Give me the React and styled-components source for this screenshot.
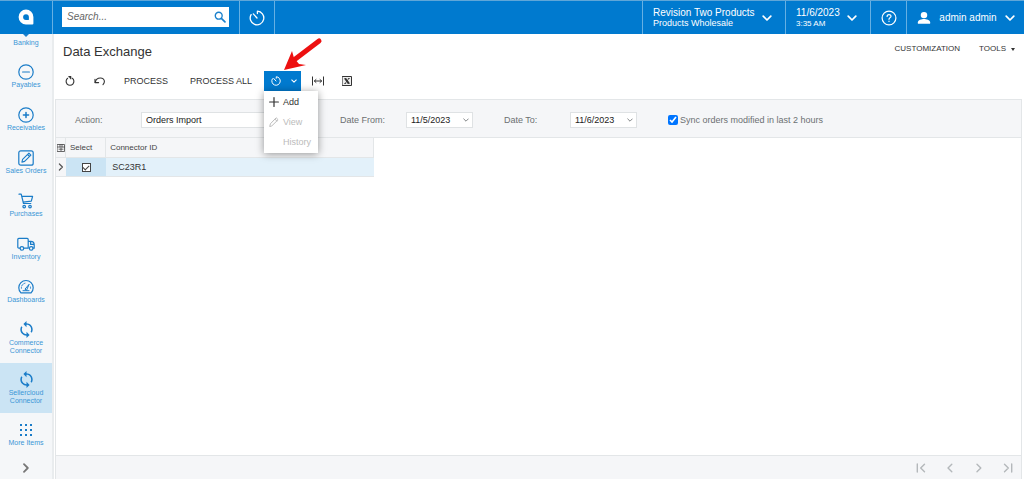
import React from 'react'
import styled, { createGlobalStyle } from 'styled-components'

const GlobalStyle = createGlobalStyle`
    *{
        box-sizing: border-box;
    }
    body{
        margin: 0;
        background-color: #fff;
        color: #333;
        font-family: "Liberation Sans", Arial, sans-serif;
        font-size: 9px;
        line-height: 12px;
    }
    button, input, select{
        font-family: inherit;
        font-size: inherit;
        line-height: inherit;
        color: inherit;
        margin: 0;
    }
    svg{
        display: block;
        flex: none;
    }
`

/* icons */

const Svg = ({ size = 16, width, height, box = '0 0 16 16', stroke = 1.2, children }) => (
    <svg
        width={width || size}
        height={height || size}
        viewBox={box}
        fill="none"
        stroke="currentColor"
        strokeWidth={stroke}
        strokeLinecap="round"
        strokeLinejoin="round"
        aria-hidden="true"
    >
        {children}
    </svg>
)

const LogoIcon = () => (
    <Svg size={16} stroke={0}>
        <path
            fill="currentColor"
            fillRule="evenodd"
            d="M8 .6a7.4 7.4 0 0 0 0 14.8h6.4a1 1 0 0 0 1-1V8A7.4 7.4 0 0 0 8 .6zM8 5.2a2.9 2.9 0 0 1 2.9 2.9v2.5a.4.4 0 0 1-.4.4H8a2.9 2.9 0 0 1 0-5.8z"
        />
    </Svg>
)

const TimerIcon = ({ size, stroke }) => (
    <Svg size={size} stroke={stroke}>
        <path d="M8.4 3.6V1.2a6.8 6.8 0 1 1-6.3 3.4" />
        <path d="M4.3 3.9 8 8" />
    </Svg>
)

const SearchIcon = () => (
    <Svg size={12} stroke={1.8}>
        <circle cx="6.3" cy="6.3" r="4.6" />
        <path d="m9.8 9.8 4.8 4.8" strokeWidth="2.2" />
    </Svg>
)

const ChevronDown = ({ size = 10, stroke = 1.7 }) => (
    <Svg size={size} box="0 0 10 10" stroke={stroke}>
        <path d="M1.2 3.2 5 7l3.8-3.8" />
    </Svg>
)

const ChevronRight = ({ size = 10, stroke = 1.4 }) => (
    <Svg size={size} box="0 0 10 10" stroke={stroke}>
        <path d="M3 1.2 6.8 5 3 8.8" />
    </Svg>
)

const HelpIcon = () => (
    <Svg size={16} stroke={1.2}>
        <circle cx="8" cy="8" r="6.9" />
        <path d="M6.1 6.4c0-2.5 3.9-2.4 3.9-.2 0 1.4-2 1.5-2 3.1M8 11.2v.3" strokeWidth="1.2" />
    </Svg>
)

const UserIcon = () => (
    <Svg width={14} height={14} stroke={0}>
        <g fill="currentColor">
            <circle cx="8" cy="4.7" r="3.7" />
            <path d="M1 14.6v-1.8c0-2.4 4.6-3.6 7-3.6s7 1.2 7 3.6v1.8z" />
        </g>
    </Svg>
)

const PayablesIcon = () => (
    <Svg>
        <circle cx="8" cy="8" r="7.2" />
        <path d="M4.6 8h6.8" />
    </Svg>
)

const ReceivablesIcon = () => (
    <Svg>
        <circle cx="8" cy="8" r="7.2" />
        <path d="M5.4 8h5.2M8 5.4v5.2" strokeWidth="1.5" />
    </Svg>
)

const SalesIcon = () => (
    <Svg>
        <rect x=".8" y=".8" width="14.4" height="14.4" rx="2" />
        <path d="m3.9 12.1.7-2.7 6.3-6.3 2 2-6.3 6.3zM9.6 4.5l1.9 1.9" strokeWidth="1.1" />
    </Svg>
)

const CartIcon = () => (
    <Svg>
        <path d="M1 1.2h2.2l2.3 9.3h7.3M3.7 3.4h10.9l-1.3 4.8-8.2 1" />
        <circle cx="6.2" cy="13.6" r="1.3" />
        <circle cx="12" cy="13.6" r="1.3" />
    </Svg>
)

const TruckIcon = () => (
    <Svg width={18} height={16} box="0 0 18 16">
        <path d="M3 12.2H1.8a1 1 0 0 1-1-1V3.4a1 1 0 0 1 1-1h8.4a1 1 0 0 1 1 1v8.8H6.8M11.2 5.4h2.6c2.1 0 3.4 1.8 3.4 3.6v3.2h-1.1M13.6 5.6v2.8h3.4" />
        <circle cx="4.9" cy="12.4" r="1.8" />
        <circle cx="14.2" cy="12.4" r="1.8" />
    </Svg>
)

const GaugeIcon = () => (
    <Svg>
        <path d="M2.9 13.8a7.2 7.2 0 1 1 10.2 0z" />
        <path d="M3.4 9.2A4.7 4.7 0 0 1 8 4.1M12.6 9.2a5 5 0 0 0-.3-2" strokeWidth="1" strokeDasharray="1.2 1.4" />
        <path d="m7.2 9.9 3.9-4.6-2.4 5.6z" strokeWidth="1" />
        <path d="M5 11.7h6" strokeWidth="1" />
    </Svg>
)

const SyncIcon = () => (
    <Svg size={17} box="2 1 20 22" stroke={0}>
        <path
            fill="currentColor"
            d="M12 4V1L8 5l4 4V6c3.31 0 6 2.69 6 6 0 1.01-.25 1.97-.7 2.8l1.46 1.46A7.93 7.93 0 0 0 20 12c0-4.42-3.58-8-8-8zm0 14c-3.31 0-6-2.69-6-6 0-1.01.25-1.97.7-2.8L5.24 7.74A7.93 7.93 0 0 0 4 12c0 4.42 3.58 8 8 8v3l4-4-4-4v3z"
        />
    </Svg>
)

const GridIcon = () => (
    <Svg size={12} box="0 0 12 12" stroke={0}>
        {[0, 5, 10].map(y => [0, 5, 10].map(x => (
            <rect key={`${x}-${y}`} x={x} y={y} width="2" height="2" fill="currentColor" />
        )))}
    </Svg>
)

const RefreshIcon = () => (
    <Svg size={10} box="0 0 10 10" stroke={1.1}>
        <path d="M2.6 2.3a3.9 3.9 0 1 0 4.8 0" />
        <path d="M3.4.6h2.4v2.6M5.8.8 4.6 2" strokeLinecap="butt" />
    </Svg>
)

const UndoIcon = () => (
    <Svg size={12} box="0 0 12 12" stroke={1.1}>
        <path d="M1.2 7.4C2.4 1.6 10.6 1.8 10.4 6.6c0 1.3-.6 2.2-1.4 3" />
        <path d="M1 4.2v3.4h3.6" />
    </Svg>
)

const FitIcon = () => (
    <Svg width={12} height={12} box="0 0 12 12" stroke={1}>
        <path d="M.5 1.5v9M11.5 1.5v9" strokeLinecap="butt" />
        <path d="M2.4 6h7.2M4 4.5 2.4 6 4 7.5M8 4.5 9.6 6 8 7.5" />
    </Svg>
)

const ExcelIcon = () => (
    <Svg size={10} box="0 0 10 10" stroke={1}>
        <rect x=".5" y=".5" width="9" height="9" fill="#eee" />
        <path d="m3.2 2.6 3.6 4.8" strokeWidth="1.9" strokeLinecap="butt" />
        <path d="M6.9 2.5 3.1 7.5M2.3 2.5h2M5.9 2.5h1.8M2.3 7.5h1.8M5.7 7.5h2" strokeWidth=".8" strokeLinecap="butt" />
    </Svg>
)

const PlusIcon = () => (
    <Svg size={10} box="0 0 10 10" stroke={1.2}>
        <path d="M5 .6v8.8M.6 5h8.8" />
    </Svg>
)

const PencilIcon = () => (
    <Svg size={10} box="0 0 10 10" stroke={1}>
        <path d="m.8 9.2.6-2.4 5.8-6 1.9 1.9-6 5.9zM6 2.2l1.8 1.8" />
    </Svg>
)

const FileIcon = () => (
    <Svg size={8} box="0 0 8 8" stroke={.8}>
        <path d="M.5.5h7v7h-7zM.5 3h7M3 .5V3M5 .5V3M2 5.2h4M4 4.2v2.4" />
    </Svg>
)

const PageEndIcon = ({ flip }) => (
    <Svg size={10} box="0 0 10 10" stroke={1.4}>
        <path d={flip ? 'M1.5 1.2 5.3 5 1.5 8.8M8.7 1v8' : 'M8.5 1.2 4.7 5l3.8 3.8M1.3 1v8'} />
    </Svg>
)

const ChevronLeft = () => (
    <Svg size={10} box="0 0 10 10" stroke={1.4}>
        <path d="M6.8 1.2 3 5l3.8 3.8" />
    </Svg>
)

/* data */

const navItems = [
    { label: 'Payables', icon: <PayablesIcon /> },
    { label: 'Receivables', icon: <ReceivablesIcon /> },
    { label: 'Sales Orders', icon: <SalesIcon /> },
    { label: 'Purchases', icon: <CartIcon /> },
    { label: 'Inventory', icon: <TruckIcon /> },
    { label: 'Dashboards', icon: <GaugeIcon /> },
    { label: 'Commerce Connector', icon: <SyncIcon />, tall: true },
    { label: 'Sellercloud Connector', icon: <SyncIcon />, tall: true, active: true },
    { label: 'More Items', icon: <GridIcon /> },
]

function TopBar(){
    return(
        <TopBarStyled>
            <LogoLink href="#" aria-label="Home"><LogoIcon /></LogoLink>
            <SearchForm>
                <input type="text" placeholder="Search..." aria-label="Search" />
                <button type="button" aria-label="Search"><SearchIcon /></button>
            </SearchForm>
            <BarButton $width="35px" $center aria-label="Recent"><TimerIcon size={16} stroke={1.3} /></BarButton>
            <Spacer />
            <BarButton $width="143px">
                <BarText>
                    <strong>Revision Two Products</strong>
                    <span>Products Wholesale</span>
                </BarText>
                <ChevronDown />
            </BarButton>
            <BarButton $width="85px">
                <BarText $small>
                    <strong>11/6/2023</strong>
                    <span>3:35 AM</span>
                </BarText>
                <ChevronDown />
            </BarButton>
            <BarButton $width="36px" $center aria-label="Help"><HelpIcon /></BarButton>
            <BarButton $width="118px">
                <UserIcon />
                <UserName>admin admin</UserName>
                <ChevronDown />
            </BarButton>
        </TopBarStyled>
    )
}

function SideNav(){
    return(
        <SideNavStyled>
            <NavLink href="#" $clipped>Banking</NavLink>
            {navItems.map(item => (
                <NavLink href="#" key={item.label} $tall={item.tall} $active={item.active}>
                    <NavIcon>{item.icon}</NavIcon>
                    {item.label}
                </NavLink>
            ))}
            <ExpandButton aria-label="Expand"><ChevronRight size={10} stroke={1.8} /></ExpandButton>
        </SideNavStyled>
    )
}

function Toolbar(){
    return(
        <ToolbarStyled>
            <ToolButton $width="30px" aria-label="Refresh"><RefreshIcon /></ToolButton>
            <ToolButton $width="29px" aria-label="Undo"><UndoIcon /></ToolButton>
            <ToolButton $width="64px">PROCESS</ToolButton>
            <ToolButton $width="86px">PROCESS ALL</ToolButton>
            <MenuHolder>
                <ScheduleButton aria-label="Schedule" aria-expanded="true">
                    <TimerIcon size={10} stroke={1.6} />
                    <ChevronDown size={6} stroke={1.7} />
                </ScheduleButton>
                <Menu>
                    <MenuItem><MenuIcon><PlusIcon /></MenuIcon>Add</MenuItem>
                    <MenuItem disabled><MenuIcon><PencilIcon /></MenuIcon>View</MenuItem>
                    <MenuItem disabled><MenuIcon />History</MenuItem>
                </Menu>
                <Arrow width="42" height="36" viewBox="0 0 42 36" aria-hidden="true">
                    <path d="M38 4 13 23" stroke="#ed1010" strokeWidth="5" strokeLinecap="round" />
                    <path d="M3 33 11 14l2 7 5 6 7 1z" fill="#ed1010" />
                </Arrow>
            </MenuHolder>
            <ToolButton $width="29px" aria-label="Fit columns"><FitIcon /></ToolButton>
            <ToolButton $width="29px" aria-label="Export to Excel"><ExcelIcon /></ToolButton>
        </ToolbarStyled>
    )
}

function SelectField({ id, label, value, width, hideArrow }){
    return(
        <Field>
            <label htmlFor={id}>{label}</label>
            <SelectBox $width={width}>
                <select id={id} defaultValue={value}>
                    <option>{value}</option>
                </select>
                {!hideArrow && <ChevronDown size={6} stroke={1.4} />}
            </SelectBox>
        </Field>
    )
}

function App(){
    return(
        <>
            <GlobalStyle />
            <Page>
                <TopBar />
                <Body>
                    <SideNav />
                    <Main>
                        <TitleRow>
                            <h1>Data Exchange</h1>
                            <TitleLinks>
                                <button>CUSTOMIZATION</button>
                                <button>TOOLS<Caret /></button>
                            </TitleLinks>
                        </TitleRow>
                        <Toolbar />
                        <Panel>
                            <Filters>
                                <SelectField id="action" label="Action:" value="Orders Import" width="168px" hideArrow />
                                <SelectField id="date-from" label="Date From:" value="11/5/2023" width="67px" />
                                <SelectField id="date-to" label="Date To:" value="11/6/2023" width="67px" />
                                <CheckLabel>
                                    <input type="checkbox" defaultChecked />
                                    Sync orders modified in last 2 hours
                                </CheckLabel>
                            </Filters>
                            <Grid>
                                <colgroup>
                                    <col width="10" />
                                    <col width="40" />
                                    <col width="267" />
                                </colgroup>
                                <thead>
                                    <tr>
                                        <th aria-label="Files"><FileIcon /></th>
                                        <th>Select</th>
                                        <th>Connector ID</th>
                                    </tr>
                                </thead>
                                <tbody>
                                    <tr>
                                        <td><ChevronRight size={8} stroke={1.5} /></td>
                                        <td><RowCheck type="checkbox" defaultChecked aria-label="Select SC23R1" /></td>
                                        <td>SC23R1</td>
                                    </tr>
                                </tbody>
                            </Grid>
                            <Pager>
                                <button disabled aria-label="First page"><PageEndIcon /></button>
                                <button disabled aria-label="Previous page"><ChevronLeft /></button>
                                <button disabled aria-label="Next page"><ChevronRight /></button>
                                <button disabled aria-label="Last page"><PageEndIcon flip /></button>
                            </Pager>
                        </Panel>
                    </Main>
                </Body>
            </Page>
        </>
    )
}

const Page = styled.div`
    display: flex;
    flex-direction: column;
    min-height: 100vh;
`

const TopBarStyled = styled.header`
    display: flex;
    height: 34px;
    background-color: #007acf;
    border-top: 1px solid #5fa6d8;
    color: #fff;
`

const LogoLink = styled.a`
    display: flex;
    align-items: center;
    justify-content: center;
    width: 52px;
    padding-bottom: 1px;
    color: #fff;
`

const SearchForm = styled.form`
    display: flex;
    align-items: center;
    width: 187px;
    padding: 0 10px 2px 9px;
    border-left: 1px solid #66b0e3;
    input{
        flex: 1;
        min-width: 0;
        height: 20px;
        padding: 0 5px;
        border: none;
        outline: none;
        border-radius: 0;
        background-color: #fff;
        color: #333;
        font-size: 10px;
    }
    input::placeholder{
        color: #666;
        font-style: italic;
    }
    button{
        display: flex;
        align-items: center;
        height: 20px;
        padding: 0 3px;
        border: none;
        background-color: #fff;
        color: #1a80cc;
    }
`

const Spacer = styled.div`
    flex: 1;
    border-left: 1px solid #66b0e3;
`

const BarButton = styled.button`
    display: flex;
    align-items: center;
    justify-content: ${props => props.$center ? 'center' : 'space-between'};
    width: ${props => props.$width};
    padding: ${props => props.$center ? '0' : '0 13px 0 10px'};
    border: none;
    border-left: 1px solid #66b0e3;
    background: none;
    &:last-child{
        padding-right: 9px;
    }
`

const BarText = styled.span`
    display: flex;
    flex-direction: column;
    text-align: left;
    white-space: nowrap;
    strong{
        font-size: 10px;
        font-weight: 400;
        line-height: 11px;
    }
    span{
        font-size: ${props => props.$small ? '8px' : '9px'};
        line-height: 11px;
    }
`

const UserName = styled.span`
    font-size: 10px;
`

const Body = styled.div`
    display: flex;
    flex: 1;
`

const SideNavStyled = styled.nav`
    display: flex;
    flex-direction: column;
    width: 54px;
    background-color: #f5f7f9;
    border-right: 2px solid #e9ecee;
`

const NavLink = styled.a`
    display: flex;
    flex-direction: column;
    align-items: center;
    height: ${props => props.$clipped ? '21px' : props.$tall ? '50px' : '43px'};
    padding-top: ${props => props.$clipped ? '0' : '7px'};
    background-color: ${props => props.$active ? '#cbe4f4' : 'transparent'};
    color: #3a96d6;
    font-size: 7px;
    line-height: 8px;
    text-align: center;
    text-decoration: none;
    &::before{
        content: ${props => props.$clipped ? '""' : 'none'};
        border: solid transparent;
        border-width: 3px 3px 2px;
        border-top-color: #1a80cc;
    }
`

const NavIcon = styled.span`
    display: flex;
    flex: none;
    align-items: center;
    justify-content: center;
    height: 19px;
    color: #1a7cc8;
`

const ExpandButton = styled.button`
    display: flex;
    align-items: center;
    justify-content: center;
    height: 23px;
    padding: 0;
    border: none;
    background: none;
    color: #777;
`

const Main = styled.main`
    display: flex;
    flex: 1;
    flex-direction: column;
    min-width: 0;
    padding: 0 2px 0 1px;
`

const TitleRow = styled.div`
    display: flex;
    justify-content: space-between;
    padding: 8px 7px 0 8px;
    h1{
        margin: 0;
        font-size: 13px;
        font-weight: 400;
        line-height: 20px;
    }
`

const TitleLinks = styled.div`
    display: flex;
    gap: 19px;
    height: 14px;
    button{
        display: flex;
        align-items: center;
        gap: 5px;
        padding: 0;
        border: none;
        background: none;
        font-size: 8px;
    }
`

const Caret = styled.i`
    border: 2px solid transparent;
    border-top: 3px solid #333;
    border-bottom: none;
`

const ToolbarStyled = styled.div`
    display: flex;
    align-items: center;
    height: 37px;
`

const ToolButton = styled.button`
    display: flex;
    align-items: center;
    justify-content: center;
    width: ${props => props.$width};
    height: 20px;
    padding: 0;
    border: none;
    background: none;
    white-space: nowrap;
`

const MenuHolder = styled.div`
    position: relative;
    margin-right: 2px;
`

const ScheduleButton = styled.button`
    display: flex;
    align-items: center;
    gap: 10px;
    height: 20px;
    padding: 0 4px 0 7px;
    border: none;
    background-color: #007acf;
    color: #fff;
`

const Menu = styled.div`
    position: absolute;
    top: 100%;
    left: 0;
    z-index: 1;
    width: 54px;
    padding: 1px 0;
    background-color: #fff;
    box-shadow: 0 1px 8px rgba(0, 0, 0, .4);
`

const MenuItem = styled.button`
    display: flex;
    align-items: center;
    gap: 4px;
    width: 100%;
    height: 20px;
    padding: 0 5px;
    border: none;
    background: none;
    &:disabled{
        color: #bbb;
    }
`

const MenuIcon = styled.span`
    width: 10px;
`

const Arrow = styled.svg`
    position: absolute;
    right: -22px;
    bottom: 18px;
    z-index: 2;
`

const Panel = styled.section`
    display: flex;
    flex: 1;
    flex-direction: column;
    border: solid #e3e6e8;
    border-width: 1px 1px 0;
`

const Filters = styled.form`
    display: flex;
    align-items: center;
    gap: 31px;
    height: 38px;
    padding-left: 19px;
    padding-top: 2px;
    background-color: #f5f6f8;
    border-bottom: 1px solid #e3e6e8;
    color: #6c7072;
`

const Field = styled.div`
    display: flex;
    align-items: center;
    label{
        width: 66px;
    }
`

const SelectBox = styled.div`
    display: flex;
    align-items: center;
    width: ${props => props.$width};
    height: 16px;
    padding-right: 3px;
    border: 1px solid #dfe2e4;
    background-color: #fff;
    select{
        flex: 1;
        min-width: 0;
        padding: 0 0 0 4px;
        border: none;
        outline: none;
        appearance: none;
        background: none;
        color: #222;
    }
`

const CheckLabel = styled.label`
    display: flex;
    align-items: center;
    gap: 2px;
    input{
        width: 10px;
        height: 10px;
        accent-color: #0075ff;
    }
`

const Grid = styled.table`
    width: 318px;
    table-layout: fixed;
    border-collapse: separate;
    border-spacing: 0;
    th, td{
        height: 19px;
        padding: 0;
        border-bottom: 1px solid #e3e6e8;
        text-align: left;
    }
    th{
        height: 20px;
        border-right: 1px solid #e3e6e8;
        background-color: #f5f6f8;
        color: #444;
        font-size: 8px;
        font-weight: 400;
    }
    th:first-child, td:first-child{
        padding-left: 1px;
    }
    th:nth-child(2), th:nth-child(3){
        padding-left: 4px;
    }
    td{
        background-color: #e3f1fa;
    }
    td:first-child{
        background-color: #f5f6f8;
        color: #555;
    }
    td:nth-child(2){
        background-color: #cbe4f4;
        text-align: center;
    }
    td:nth-child(3){
        padding-left: 6px;
    }
`

const RowCheck = styled.input`
    display: grid;
    place-items: center;
    width: 9px;
    height: 9px;
    margin: 0 auto;
    border: 1px solid #444;
    background-color: #fff;
    appearance: none;
    &:checked::before{
        content: "";
        width: 5px;
        height: 3px;
        border: solid #444;
        border-width: 0 0 1px 1px;
        transform: rotate(-45deg);
    }
`

const Pager = styled.div`
    display: flex;
    align-items: center;
    justify-content: flex-end;
    gap: 19px;
    height: 24px;
    margin-top: auto;
    padding-right: 8px;
    background-color: #f5f6f8;
    border-top: 1px solid #e3e6e8;
    button{
        padding: 0;
        border: none;
        background: none;
        color: #b4b8bb;
    }
`

export default App
